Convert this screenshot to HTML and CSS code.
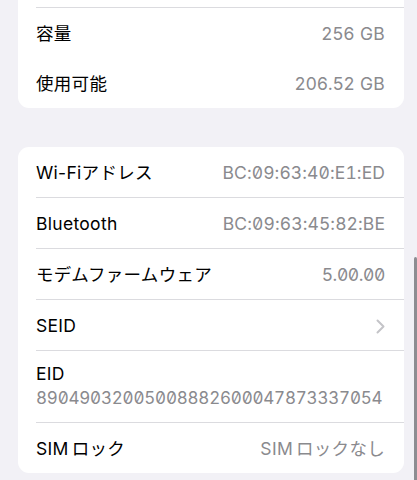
FILE: index.html
```html
<html>
<head>
    <meta charset="utf-8">
    <title>情報</title>
    <link rel="stylesheet" href="styles.css">
</head>
<body>
    <div class="page">
        <div class="group group-cut">
            <div class="row">
                <div class="row-inner">
                    <span class="label">容量</span>
                    <span class="value">256 GB</span>
                </div>
            </div>
            <div class="row">
                <div class="row-inner no-line">
                    <span class="label">使用可能</span>
                    <span class="value">206.52 GB</span>
                </div>
            </div>
        </div>

        <div class="group">
            <div class="row">
                <div class="row-inner no-line">
                    <span class="label">Wi-Fiアドレス</span>
                    <span class="value mono">BC:09:63:40:E1:ED</span>
                </div>
            </div>
            <div class="row">
                <div class="row-inner">
                    <span class="label">Bluetooth</span>
                    <span class="value mono">BC:09:63:45:82:BE</span>
                </div>
            </div>
            <div class="row">
                <div class="row-inner">
                    <span class="label">モデムファームウェア</span>
                    <span class="value mono version">5.00.00</span>
                </div>
            </div>
            <div class="row">
                <div class="row-inner">
                    <span class="label">SEID</span>
                    <svg class="chevron" width="9" height="15" viewBox="0 0 9 15">
                        <path d="M1.5 1.5 L7.5 7.5 L1.5 13.5" fill="none" stroke="#c4c4c8" stroke-width="2" stroke-linecap="round" stroke-linejoin="round"/>
                    </svg>
                </div>
            </div>
            <div class="row">
                <div class="row-inner row-stack">
                    <span class="label">EID</span>
                    <span class="value mono eid">89049032005008882600047873337054</span>
                </div>
            </div>
            <div class="row">
                <div class="row-inner">
                    <span class="label">SIM<span class="jp-gap">ロック</span></span>
                    <span class="value">SIM<span class="jp-gap">ロックなし</span></span>
                </div>
            </div>
        </div>
    </div>
    <div class="scroll-indicator"></div>
</body>
</html>
```

FILE: styles.css
```css
body {
    margin: 0;
    background-color: #f2f1f6;
    font-family: Inter, "Noto Sans CJK JP", sans-serif;
    font-size: 17.5px;
    color: #000;
    height: 480px;
    overflow: hidden;
}

.page {
    padding: 0 13px 0 18px;
}

.group {
    background-color: #fff;
    border-radius: 11px;
    margin-bottom: 39px;
}

.group:last-child {
    margin-bottom: 0;
}

.group-cut {
    border-radius: 0 0 11px 11px;
    padding-top: 7px;
}

.row {
    padding-left: 18px;
}

.row-inner {
    display: flex;
    justify-content: space-between;
    align-items: center;
    box-sizing: border-box;
    min-height: 51px;
    padding-top: 2px;
    padding-right: 19px;
    border-top: 1px solid #dbdbdf;
}

.row-inner.no-line {
    border-top: none;
    min-height: 50px;
}

.row-stack {
    flex-direction: column;
    align-items: flex-start;
    padding-top: 12px;
    padding-bottom: 13px;
}

.label {
    line-height: 22px;
    letter-spacing: 0.3px;
}

.value {
    line-height: 22px;
    letter-spacing: 0.3px;
    color: #8a8a8e;
}

.mono {
    font-feature-settings: "tnum", "zero";
    letter-spacing: 0.1px;
}

.version {
    letter-spacing: -0.4px;
}

.eid {
    margin-top: 2px;
    font-size: 17px;
    letter-spacing: -0.2px;
}

.jp-gap {
    margin-left: 3px;
}

.scroll-indicator {
    position: absolute;
    right: 0;
    top: 257px;
    width: 3px;
    height: 230px;
    border-radius: 2px;
    background-color: #8d8d92;
}
```
